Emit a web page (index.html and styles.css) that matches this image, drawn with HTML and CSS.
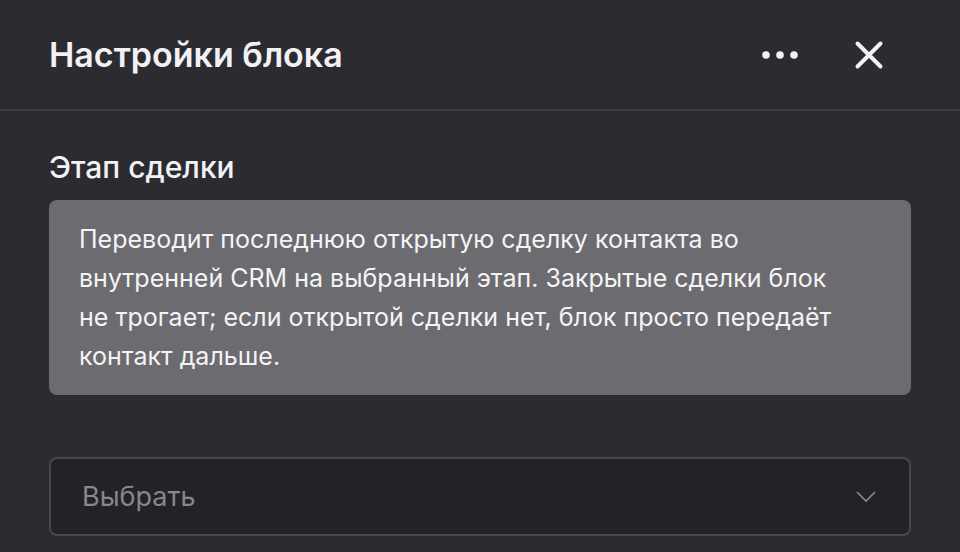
FILE: index.html
```html
<!DOCTYPE html>
<html lang="ru">
<head>
    <meta charset="UTF-8">
    <meta name="viewport" content="width=device-width, initial-scale=1.0">
    <title>Настройки блока</title>
    <link rel="stylesheet" href="styles.css">
</head>
<body>
    <div class="panel">
        <div class="panel-header">
            <h1 class="panel-title">Настройки блока</h1>
            <div class="header-actions">
                <button class="icon-btn" title="Ещё">
                    <svg width="36" height="20" viewBox="0 0 36 20">
                        <circle cx="4" cy="10" r="3.8" fill="#f2f2f4"/>
                        <circle cx="18" cy="10" r="3.8" fill="#f2f2f4"/>
                        <circle cx="32" cy="10" r="3.8" fill="#f2f2f4"/>
                    </svg>
                </button>
                <button class="icon-btn" title="Закрыть">
                    <svg width="30" height="30" viewBox="0 0 30 30">
                        <path d="M3.5 3.5 L26.5 26.5 M26.5 3.5 L3.5 26.5" stroke="#f2f2f4" stroke-width="4" stroke-linecap="round"/>
                    </svg>
                </button>
            </div>
        </div>

        <div class="panel-body">
            <div class="field-label">Этап сделки</div>
            <div class="hint">
                Переводит последнюю открытую сделку контакта во внутренней CRM на выбранный этап. Закрытые сделки блок не трогает; если открытой сделки нет, блок просто передаёт контакт дальше.
            </div>
            <div class="select">
                <span class="select-placeholder">Выбрать</span>
                <svg class="select-arrow" width="22" height="14" viewBox="0 0 22 14">
                    <path d="M2 2 L11 11 L20 2" stroke="#8a898e" stroke-width="1.6" fill="none"/>
                </svg>
            </div>
        </div>
    </div>
</body>
</html>
```

FILE: styles.css
```css
body {
    margin: 0;
    padding: 0;
    background-color: #2c2b31;
    color: #f2f2f4;
    font-family: Inter, "Noto Sans", sans-serif;
}
.panel {
    width: 960px;
    height: 552px;
    overflow: hidden;
}
.panel-header {
    height: 111px;
    border-bottom: 2px solid #3d3c42;
    box-sizing: border-box;
    padding: 0 76px 0 49px;
    display: flex;
    align-items: center;
    justify-content: space-between;
}
.panel-title {
    margin: 0;
    font-size: 34px;
    font-weight: 600;
}
.header-actions {
    display: flex;
    align-items: center;
    gap: 56px;
}
.icon-btn {
    background: none;
    border: none;
    padding: 0;
    cursor: pointer;
    display: flex;
}
.panel-body {
    padding: 38px 49px 0 49px;
}
.field-label {
    font-size: 30px;
    font-weight: 500;
    line-height: 36px;
    margin-bottom: 15px;
}
.hint {
    background-color: #6c6b70;
    border-radius: 8px;
    padding: 20px 64px 19px 30px;
    font-size: 25px;
    line-height: 39px;
    color: #f4f4f6;
}
.select {
    margin-top: 62px;
    height: 79px;
    box-sizing: border-box;
    background-color: #232227;
    border: 2px solid #48474d;
    border-radius: 8px;
    display: flex;
    align-items: center;
    justify-content: space-between;
    padding: 0 32px 0 31px;
}
.select-placeholder {
    font-size: 27px;
    color: #88878c;
}
```
